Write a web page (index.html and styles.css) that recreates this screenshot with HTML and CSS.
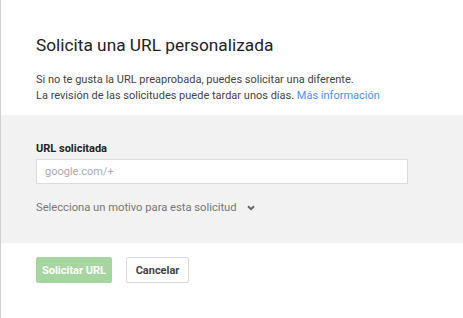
FILE: index.html
```html
<!DOCTYPE html>
<html lang="es">
<head>
<meta charset="utf-8">
<title>Solicita una URL personalizada</title>
<link rel="stylesheet" href="styles.css">
</head>
<body>
<div class="dialog">
  <div class="header">
    <h1 class="title">Solicita una URL personalizada</h1>
    <p class="desc">Si no te gusta la URL preaprobada, puedes solicitar una diferente.<br>La revisión de las solicitudes puede tardar unos días. <a class="link" href="#">Más información</a></p>
  </div>
  <div class="form">
    <label class="label" for="url">URL solicitada</label>
    <input class="input" id="url" type="text" placeholder="google.com/+">
    <div class="reason">
      <span>Selecciona un motivo para esta solicitud</span>
      <svg class="chev" width="8" height="6" viewBox="0 0 8 6"><path d="M1 1.2 L4 4.2 L7 1.2" fill="none" stroke="#666" stroke-width="2"/></svg>
    </div>
  </div>
  <div class="footer">
    <button class="btn btn-primary" type="button">Solicitar URL</button>
    <button class="btn btn-cancel" type="button">Cancelar</button>
  </div>
</div>
</body>
</html>
```
FILE: styles.css
```css
html, body {
  margin: 0;
  padding: 0;
  background: #fff;
}
body {
  font-family: Roboto, "Liberation Sans", Arial, sans-serif;
  width: 463px;
  height: 318px;
  overflow: hidden;
}
.dialog {
  border-left: 1px solid #cfcfcf;
  height: 318px;
  box-sizing: border-box;
}
.header {
  padding: 33px 35px 0;
}
.title {
  margin: 0;
  font-size: 17.3px;
  font-weight: normal;
  line-height: 24px;
  color: #222;
}
.desc {
  margin: 15px 0 0;
  font-size: 11px;
  line-height: 16px;
  color: #444;
}
.link {
  color: #4d8ff0;
  text-decoration: none;
}
.form {
  margin-top: 11px;
  background: #f2f2f2;
  padding: 26px 35px 27px;
  display: flex;
  flex-direction: column;
  align-items: flex-start;
}
.label {
  font-size: 11px;
  line-height: 16px;
  font-weight: bold;
  color: #222;
}
.input {
  margin-top: 2px;
  width: 372px;
  height: 25px;
  box-sizing: border-box;
  border: 1px solid #dcdcdc;
  background: #fff;
  padding: 0 8px;
  font-family: inherit;
  font-size: 11px;
  color: #222;
  outline: none;
}
.input::placeholder {
  color: #aaa;
}
.reason {
  margin-top: 16px;
  font-size: 11.2px;
  line-height: 16px;
  color: #777;
  display: flex;
  align-items: center;
  gap: 10px;
}
.chev {
  display: block;
}
.footer {
  padding: 14px 35px;
  display: flex;
  gap: 14px;
}
.btn {
  height: 26px;
  box-sizing: border-box;
  border-radius: 2px;
  font-family: inherit;
  font-size: 11px;
  font-weight: bold;
  padding: 0;
  white-space: nowrap;
  cursor: pointer;
}
.btn-primary {
  background: #a5d69f;
  border: 1px solid #a5d69f;
  color: #fff;
  width: 76px;
}
.btn-cancel {
  background: #fff;
  border: 1px solid #d9d9d9;
  color: #444;
  width: 63px;
}
```
